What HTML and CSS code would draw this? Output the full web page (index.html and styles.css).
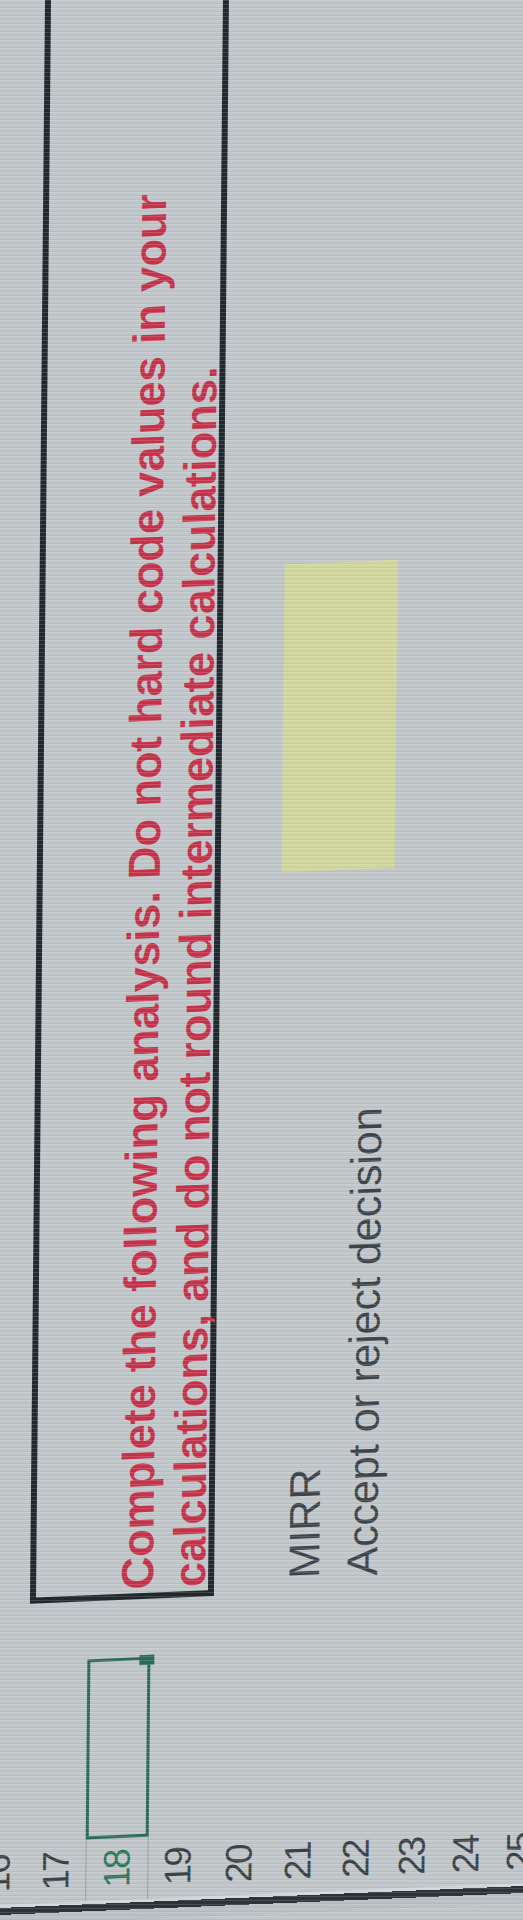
FILE: index.html
```html
<!DOCTYPE html>
<html lang="en">
<head>
<meta charset="utf-8">
<title>Spreadsheet photo</title>
<link rel="stylesheet" href="styles.css">
</head>
<body>
<div class="sheet">
  <div class="bezel"></div>

  <div class="rh g1">16</div>
  <div class="rh g2">17</div>
  <div class="rh g3 active">18</div>
  <div class="rh g4">19</div>
  <div class="rh g5">20</div>
  <div class="rh g6">21</div>
  <div class="rh g7">22</div>
  <div class="rh g8">23</div>
  <div class="rh g9">24</div>
  <div class="rh g10">25</div>

  <div class="selected"><span class="handle"></span></div>

  <div class="note">Complete the following analysis. Do not hard code values in your<br>calculations, and do not round intermediate calculations.</div>

  <div class="label g6">MIRR</div>
  <div class="label g7">Accept or reject decision</div>

  <div class="input"></div>
</div>
</body>
</html>
```
FILE: styles.css
```css
html, body {
  margin: 0;
  padding: 0;
  width: 523px;
  height: 1920px;
  overflow: hidden;
}

body {
  background: #c0c6c9;
  font-family: "Liberation Sans", Arial, sans-serif;
  position: relative;
}

body::after {
  content: "";
  position: fixed;
  inset: 0;
  pointer-events: none;
  background: repeating-linear-gradient(180deg,
    rgba(255, 255, 255, 0.14) 0 1px,
    rgba(255, 255, 255, 0) 1px 3px,
    rgba(50, 60, 70, 0.06) 3px 4px);
}

.sheet {
  width: 1960px;
  display: grid;
  grid-template-columns: 20px 62px 180px 58px 721px 308px 1fr;
  grid-template-rows: 58px 59px 63px 60px 61px 58px 58px 54px 53px 56px;
  transform-origin: 0 0;
  transform: translate(120px, 1700px) matrix(1, -0.042, -0.0094, 1, 0, 0) translate(-120px, -1700px) translateY(1920px) rotate(-90deg) translateY(-30px);
}

.bezel {
  grid-column: 1;
  grid-row: 1 / -1;
  background: linear-gradient(to right, #bac0c3 0 10px, #2b3338 10px 17px, #d3d8da 17px 20px);
}

.g1 { grid-row: 1; }
.g2 { grid-row: 2; }
.g3 { grid-row: 3; }
.g4 { grid-row: 4; }
.g5 { grid-row: 5; }
.g6 { grid-row: 6; }
.g7 { grid-row: 7; }
.g8 { grid-row: 8; }
.g9 { grid-row: 9; }
.g10 { grid-row: 10; }

.rh {
  grid-column: 2;
  display: flex;
  align-items: center;
  justify-content: center;
  font-size: 37px;
  letter-spacing: -2px;
  color: #3a4246;
  box-sizing: border-box;
}

.rh.active {
  color: #2e7658;
  border-top: 1px solid rgba(70, 100, 100, 0.35);
  border-bottom: 1px solid rgba(70, 100, 100, 0.35);
}

.selected {
  grid-column: 3;
  grid-row: 3;
  position: relative;
  border: 3px solid #2c6a5a;
  box-sizing: border-box;
}

.handle {
  position: absolute;
  right: -5px;
  bottom: -7px;
  width: 10px;
  height: 15px;
  background: #2c6a5a;
}

.note {
  grid-column: 5 / 8;
  grid-row: 2 / 5;
  margin: 1px 0 -3px 0;
  border: 6px solid #20282d;
  box-sizing: border-box;
  padding: 76px 0 0 4px;
  font-weight: 700;
  font-size: 45px;
  line-height: 52px;
  color: #c5334b;
  white-space: nowrap;
}

.label {
  grid-column: 5;
  align-self: start;
  padding: 11px 0 0 14px;
  font-size: 43px;
  line-height: 43px;
  color: #3d454b;
  white-space: nowrap;
}

.input {
  grid-column: 6;
  grid-row: 6 / 8;
  margin-top: 3px;
  background: #d2d79c;
}
```
